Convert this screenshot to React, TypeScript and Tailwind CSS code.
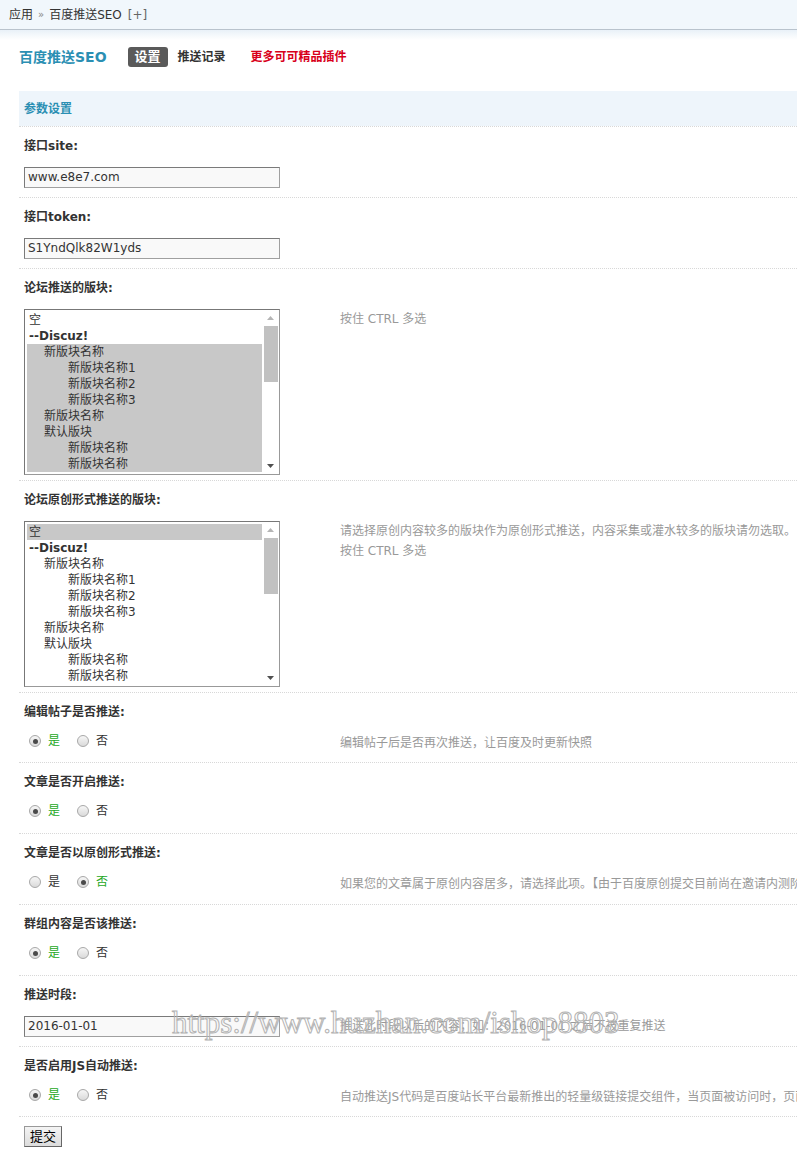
import type { ReactNode } from 'react';

type Opt = { t: string; lvl: 0 | 1 | 2; b?: boolean };

const boards: Opt[] = [
  { t: '空', lvl: 0 },
  { t: '--Discuz!', lvl: 0, b: true },
  { t: '新版块名称', lvl: 1 },
  { t: '新版块名称1', lvl: 2 },
  { t: '新版块名称2', lvl: 2 },
  { t: '新版块名称3', lvl: 2 },
  { t: '新版块名称', lvl: 1 },
  { t: '默认版块', lvl: 1 },
  { t: '新版块名称', lvl: 2 },
  { t: '新版块名称', lvl: 2 },
];

function MultiSelect({ selected }: { selected: number[] }) {
  return (
    <div className="flex w-[256px] h-[166px] border border-[#999] border-t-[#777] border-l-[#777] bg-white">
      <div className="flex-1 h-full pt-[2px] pl-[2px] overflow-hidden">
        {boards.map((o, i) => (
          <div
            key={i}
            className={`h-[16px] leading-[16px] whitespace-nowrap ${selected.includes(i) ? 'bg-[#c8c8c8]' : ''} ${
              o.lvl === 2 ? 'pl-[41px]' : o.lvl === 1 ? 'pl-[17px]' : 'pl-[2px]'
            } ${o.b ? 'font-bold' : ''}`}
          >
            {o.t}
          </div>
        ))}
      </div>
      <div className="w-[17px] shrink-0 flex flex-col items-center">
        <div className="h-[16px] flex items-center justify-center">
          <svg width="7" height="4" viewBox="0 0 7 4">
            <path d="M0 4 L3.5 0 L7 4 Z" fill="#b5b5b5" />
          </svg>
        </div>
        <div className="flex-1 w-full">
          <div className="mx-auto w-[14px] h-[56px] bg-[#c1c1c1]" />
        </div>
        <div className="h-[16px] flex items-center justify-center">
          <svg width="7" height="4" viewBox="0 0 7 4">
            <path d="M0 0 L3.5 4 L7 0 Z" fill="#505050" />
          </svg>
        </div>
      </div>
    </div>
  );
}

function Radio({ checked }: { checked?: boolean }) {
  return (
    <span className="flex items-center justify-center w-[12px] h-[12px] rounded-full border border-[#a8a8a8] bg-[linear-gradient(#f6f6f6,#dadada)]">
      {checked && <span className="w-[5px] h-[5px] rounded-full bg-[#4a4a4a]" />}
    </span>
  );
}

function YesNo({ yes }: { yes: boolean }) {
  return (
    <div className="flex items-center h-[16px] pl-[5px]">
      <Radio checked={yes} />
      <span className={`ml-[7px] ${yes ? 'text-[#25a825]' : 'text-[#333]'}`}>是</span>
      <span className="ml-[17px]">
        <Radio checked={!yes} />
      </span>
      <span className={`ml-[7px] ${!yes ? 'text-[#25a825]' : 'text-[#333]'}`}>否</span>
    </div>
  );
}

function TextInput({ value }: { value: string }) {
  return (
    <div className="w-[256px] h-[21px] border border-[#a0a0a0] border-t-[#7a7a7a] border-l-[#7a7a7a] bg-[#f9f9f9] pl-[3px] leading-[19px] text-[#333]">
      {value}
    </div>
  );
}

function Row({
  label,
  control,
  desc,
  h = 'h-[40px] pt-[10px]',
  extra,
}: {
  label: string;
  control: ReactNode;
  desc?: ReactNode;
  h?: string;
  extra?: ReactNode;
}) {
  return (
    <div className="relative border-t border-dotted border-[#d8d8d8]">
      <div className="h-[30px] pl-[5px] pt-[12px] leading-[14px] font-bold text-[#333]">{label}</div>
      <div className="flex">
        <div className={`w-[321px] shrink-0 pl-[5px] ${h}`}>{control}</div>
        <div className="pt-[10px] leading-[20px] text-[#999] whitespace-nowrap">{desc}</div>
      </div>
      {extra}
    </div>
  );
}

export default function App() {
  return (
    <div className="w-[797px] h-[1149px] overflow-hidden bg-white text-[12px] text-[#333] font-['DejaVu_Sans','Noto_Sans_CJK_SC',sans-serif]">
      {/* breadcrumb */}
      <div className="h-[30px] bg-[#f1f7fc] border-b border-[#b9c3cd] pl-[9px] flex items-center">
        <span>应用</span>
        <span className="mx-[5px] text-[#888] text-[10px]">»</span>
        <span>百度推送SEO</span>
        <span className="ml-[6px] text-[#666]">[+]</span>
      </div>

      <div className="bg-[linear-gradient(#e9f1f8,#fff_10px)] pt-[17px] pl-[19px]">
        {/* title + tabs */}
        <div className="flex items-center h-[20px]">
          <span className="text-[14px] font-bold text-[#2b8fb3]">百度推送SEO</span>
          <span className="ml-[21px] h-[20px] px-[7px] flex items-center rounded-[3px] bg-[#5a5a5a] text-white font-bold text-[13px]">
            设置
          </span>
          <span className="ml-[10px] font-bold text-[#333]">推送记录</span>
          <span className="ml-[25px] font-bold text-[#d8001a]">更多可可精品插件</span>
        </div>

        {/* settings table */}
        <div className="mt-[24px]">
          <div className="h-[35px] bg-[#eef5fb] pl-[5px] flex items-center font-bold text-[#2b8fb3]">参数设置</div>

          <Row label="接口site:" control={<TextInput value="www.e8e7.com" />} />
          <Row label="接口token:" control={<TextInput value="S1YndQlk82W1yds" />} />
          <Row
            label="论坛推送的版块:"
            h="h-[181px] pt-[10px]"
            control={<MultiSelect selected={[2, 3, 4, 5, 6, 7, 8, 9]} />}
            desc="按住 CTRL 多选"
          />
          <Row
            label="论坛原创形式推送的版块:"
            h="h-[181px] pt-[10px]"
            control={<MultiSelect selected={[0]} />}
            desc={
              <>
                请选择原创内容较多的版块作为原创形式推送，内容采集或灌水较多的版块请勿选取。
                <br />
                按住 CTRL 多选
              </>
            }
          />
          <Row
            label="编辑帖子是否推送:"
            h="h-[39px] pt-[10px]"
            control={<YesNo yes />}
            desc="编辑帖子后是否再次推送，让百度及时更新快照"
          />
          <Row label="文章是否开启推送:" h="h-[40px] pt-[10px]" control={<YesNo yes />} />
          <Row
            label="文章是否以原创形式推送:"
            h="h-[40px] pt-[10px]"
            control={<YesNo yes={false} />}
            desc="如果您的文章属于原创内容居多，请选择此项。【由于百度原创提交目前尚在邀请内测阶段，如未获得资格请勿开启】"
          />
          <Row label="群组内容是否该推送:" h="h-[40px] pt-[10px]" control={<YesNo yes />} />
          <Row
            label="推送时段:"
            control={<TextInput value="2016-01-01" />}
            desc="推送此时段以后的内容；如：2016-01-01 之后不被重复推送"
            extra={
              <div className="absolute left-[153px] top-[31px] whitespace-nowrap leading-none text-[31px] font-['Liberation_Serif',serif] text-transparent [-webkit-text-stroke:1px_#b3b3b3] pointer-events-none">
                https://www.huzhan.com/ishop8803
              </div>
            }
          />
          <Row
            label="是否启用JS自动推送:"
            h="h-[39px] pt-[10px]"
            control={<YesNo yes />}
            desc="自动推送JS代码是百度站长平台最新推出的轻量级链接提交组件，当页面被访问时，页面URL将立即被推送给百度"
          />

          <div className="border-t border-dotted border-[#d8d8d8] pt-[9px] pl-[5px]">
            <button className="h-[21px] px-[5px] border border-[#999] border-r-[#666] border-b-[#666] bg-[linear-gradient(#f4f4f4,#dcdcdc)] text-[13px] leading-none text-black">
              提交
            </button>
          </div>
        </div>
      </div>
    </div>
  );
}
